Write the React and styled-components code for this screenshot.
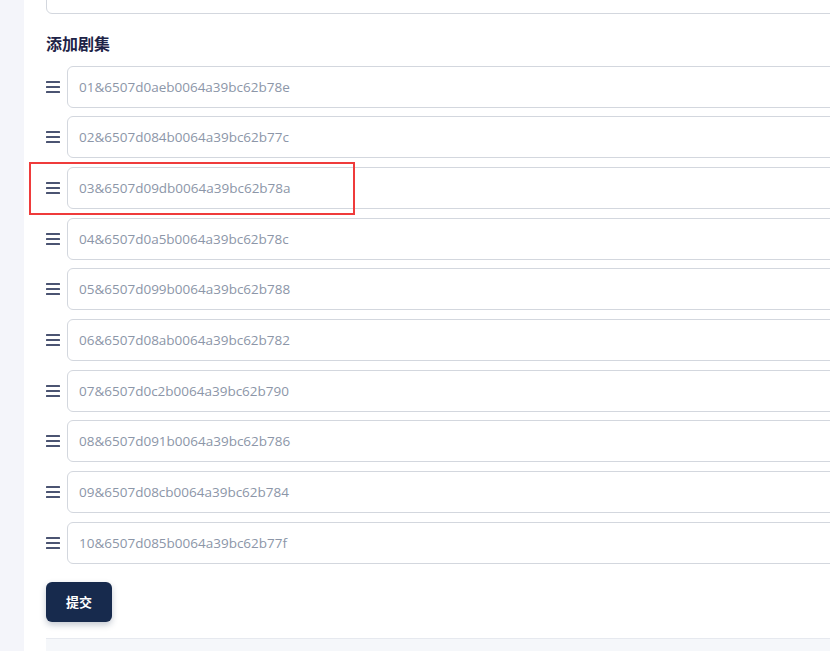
import React from 'react';
import styled, { createGlobalStyle } from 'styled-components';

const GlobalStyle = createGlobalStyle`
	html, body {
		margin: 0;
		padding: 0;
		background: #f4f5fa;
		overflow: hidden;
		font-family: "Noto Sans", "Noto Sans CJK SC", sans-serif;
	}
`;

const Page = styled.div`
	display: flex;
	height: 651px;
`;

const Gutter = styled.div`
	width: 24px;
	flex: none;
	background: #f4f5fa;
`;

const Panel = styled.div`
	flex: none;
	width: 1100px;
	background: #fff;
	padding-left: 22px;
	box-sizing: border-box;
	display: flex;
	flex-direction: column;
`;

const TopInput = styled.div`
	margin-top: -28px;
	height: 42px;
	border: 1px solid #d3d7de;
	border-radius: 6px;
	box-sizing: border-box;
`;

const Heading = styled.h3`
	margin: 19.5px 0 11px;
	font-size: 16px;
	line-height: 21px;
	font-weight: 700;
	color: #1e2347;
`;

const List = styled.div`
	display: flex;
	flex-direction: column;
	gap: 8.7px;
`;

const Row = styled.div`
	position: relative;
	display: flex;
	align-items: center;
	gap: 7px;
`;

const Handle = styled.svg`
	flex: none;
	width: 14px;
	height: 12px;
	color: #4b5472;
`;

const Field = styled.div`
	flex: 1;
	height: 42px;
	border: 1px solid #d3d7de;
	border-radius: 6px;
	box-sizing: border-box;
	padding: 0 11px;
	display: flex;
	align-items: center;
	font-family: "Open Sans", "Noto Sans", sans-serif;
	font-size: 13.5px;
	color: #8c96a8;
`;

const Highlight = styled.div`
	position: absolute;
	left: -17px;
	top: -5px;
	width: 326px;
	height: 53px;
	border: 2px solid #ef3b3b;
	box-sizing: border-box;
	pointer-events: none;
`;

const SubmitButton = styled.button`
	align-self: flex-start;
	margin-top: 18px;
	width: 66px;
	height: 40px;
	border: none;
	border-radius: 6px;
	background: #172a4d;
	color: #fff;
	font-family: "Noto Sans CJK SC", sans-serif;
	font-size: 13px;
	font-weight: 700;
	box-shadow: 0 3px 6px rgba(23, 42, 77, 0.25);
	cursor: pointer;
`;

const Footer = styled.div`
	margin-top: 16px;
	flex: 1;
	background: #f5f7fa;
	border-top: 1px solid #e6e9ef;
`;

const episodes = [
	'01&6507d0aeb0064a39bc62b78e',
	'02&6507d084b0064a39bc62b77c',
	'03&6507d09db0064a39bc62b78a',
	'04&6507d0a5b0064a39bc62b78c',
	'05&6507d099b0064a39bc62b788',
	'06&6507d08ab0064a39bc62b782',
	'07&6507d0c2b0064a39bc62b790',
	'08&6507d091b0064a39bc62b786',
	'09&6507d08cb0064a39bc62b784',
	'10&6507d085b0064a39bc62b77f',
];

const DragIcon = () => (
	<Handle viewBox="0 0 14 12">
		<rect x="0" y="0" width="14" height="2" rx="0.5" fill="currentColor" />
		<rect x="0" y="5" width="14" height="2" rx="0.5" fill="currentColor" />
		<rect x="0" y="10" width="14" height="2" rx="0.5" fill="currentColor" />
	</Handle>
);

const App = () => (
	<>
		<GlobalStyle />
		<Page>
			<Gutter />
			<Panel>
				<TopInput />
				<Heading>添加剧集</Heading>
				<List>
					{episodes.map((ep, i) => (
						<Row key={ep}>
							<DragIcon />
							<Field>{ep}</Field>
							{i === 2 && <Highlight />}
						</Row>
					))}
				</List>
				<SubmitButton>提交</SubmitButton>
				<Footer />
			</Panel>
		</Page>
	</>
);

export default App;
